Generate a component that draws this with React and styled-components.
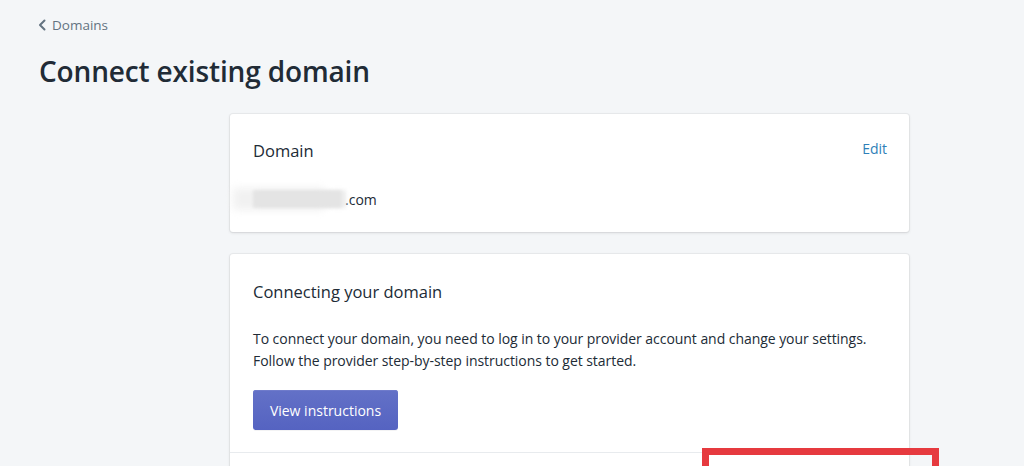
import React from "react";
import styled, { createGlobalStyle } from "styled-components";

const Global = createGlobalStyle`
  html, body { margin: 0; padding: 0; background: #f4f6f8; }
  body { font-family: "Open Sans", "Noto Sans", sans-serif; color: #212b36; -webkit-font-smoothing: antialiased; }
`;

const Page = styled.div`
  position: relative;
  width: 1024px;
  height: 466px;
  overflow: hidden;
  padding: 0 39px;
  box-sizing: border-box;
`;

const Breadcrumb = styled.a`
  display: inline-flex;
  align-items: center;
  gap: 6px;
  margin-top: 15px;
  margin-left: -1px;
  height: 20px;
  color: #637381;
  font-size: 13.5px;
  text-decoration: none;
  svg { display: block; }
`;

const Title = styled.h1`
  margin: 17px 0 0;
  font-size: 28px;
  line-height: 36px;
  font-weight: 600;
  letter-spacing: -0.15px;
  color: #212b36;
`;

const Layout = styled.div`
  display: grid;
  grid-template-columns: 191px 679px;
  row-gap: 22px;
  margin-top: 25px;
`;

const Card = styled.section`
  grid-column: 2;
  background: #fff;
  border-radius: 3px;
  box-shadow: 0 0 0 1px rgba(63, 63, 68, 0.05), 0 1px 3px 0 rgba(63, 63, 68, 0.15);
`;

const Section = styled.div`
  padding: ${(p) => p.$pad || "23px 23px 22px"};
  & + & { border-top: 1px solid #e8ebee; }
`;

const Header = styled.div`
  display: flex;
  justify-content: space-between;
  align-items: center;
`;

const CardTitle = styled.h2`
  margin: 0;
  font-size: 16.5px;
  line-height: 28px;
  font-weight: 500;
  color: #212b36;
`;

const EditLink = styled.a`
  color: #2e7fb8;
  font-size: 14px;
  line-height: 24px;
  margin-top: -4px;
  margin-right: -1px;
  text-decoration: none;
`;

const DomainRow = styled.div`
  margin-top: 23px;
  height: 22px;
  display: flex;
  align-items: center;
  font-size: 14px;
  color: #212b36;
`;

const Redacted = styled.span`
  display: inline-block;
  width: 88px;
  height: 18px;
  margin-right: 4px;
  background: #e4e4e4;
  filter: blur(1.5px);
  box-shadow: -18px 0 8px 2px #f1f1f1, 5px 0 3px 0 #ececec;
`;

const Body = styled.p`
  margin: 22px 0 0;
  font-size: 14px;
  line-height: 22px;
  letter-spacing: -0.05px;
  color: #212b36;
`;

const Button = styled.button`
  margin-top: 18px;
  width: 145px;
  height: 40px;
  border: 0;
  border-radius: 3px;
  background: linear-gradient(#6371c7, #5563c1);
  box-shadow: inset 0 1px 0 0 #6f7bcb, 0 1px 0 0 rgba(22, 29, 37, 0.05);
  color: #fff;
  font-family: inherit;
  font-size: 14px;
  font-weight: 500;
  cursor: pointer;
`;

const Annotation = styled.div`
  position: absolute;
  left: 702px;
  top: 448px;
  width: 237px;
  height: 60px;
  box-sizing: border-box;
  border: 7px solid #e63a3f;
`;

export default function App() {
  return (
    <>
      <Global />
      <Page>
        <Breadcrumb href="#">
          <svg width="8" height="12" viewBox="0 0 8 12" fill="none">
            <path d="M6.5 1.5L2 6l4.5 4.5" stroke="#637381" strokeWidth="2" strokeLinecap="round" strokeLinejoin="round" />
          </svg>
          Domains
        </Breadcrumb>
        <Title>Connect existing domain</Title>
        <Layout>
          <Card>
            <Section>
              <Header>
                <CardTitle>Domain</CardTitle>
                <EditLink href="#">Edit</EditLink>
              </Header>
              <DomainRow>
                <Redacted />
                <span>.com</span>
              </DomainRow>
            </Section>
          </Card>
          <Card>
            <Section $pad="24px 23px 22px">
              <CardTitle>Connecting your domain</CardTitle>
              <Body>
                To connect your domain, you need to log in to your provider account and change your settings.
                <br />
                Follow the provider step-by-step instructions to get started.
              </Body>
              <Button>View instructions</Button>
            </Section>
            <Section $pad="22px 23px 40px" />
          </Card>
        </Layout>
        <Annotation />
      </Page>
    </>
  );
}
